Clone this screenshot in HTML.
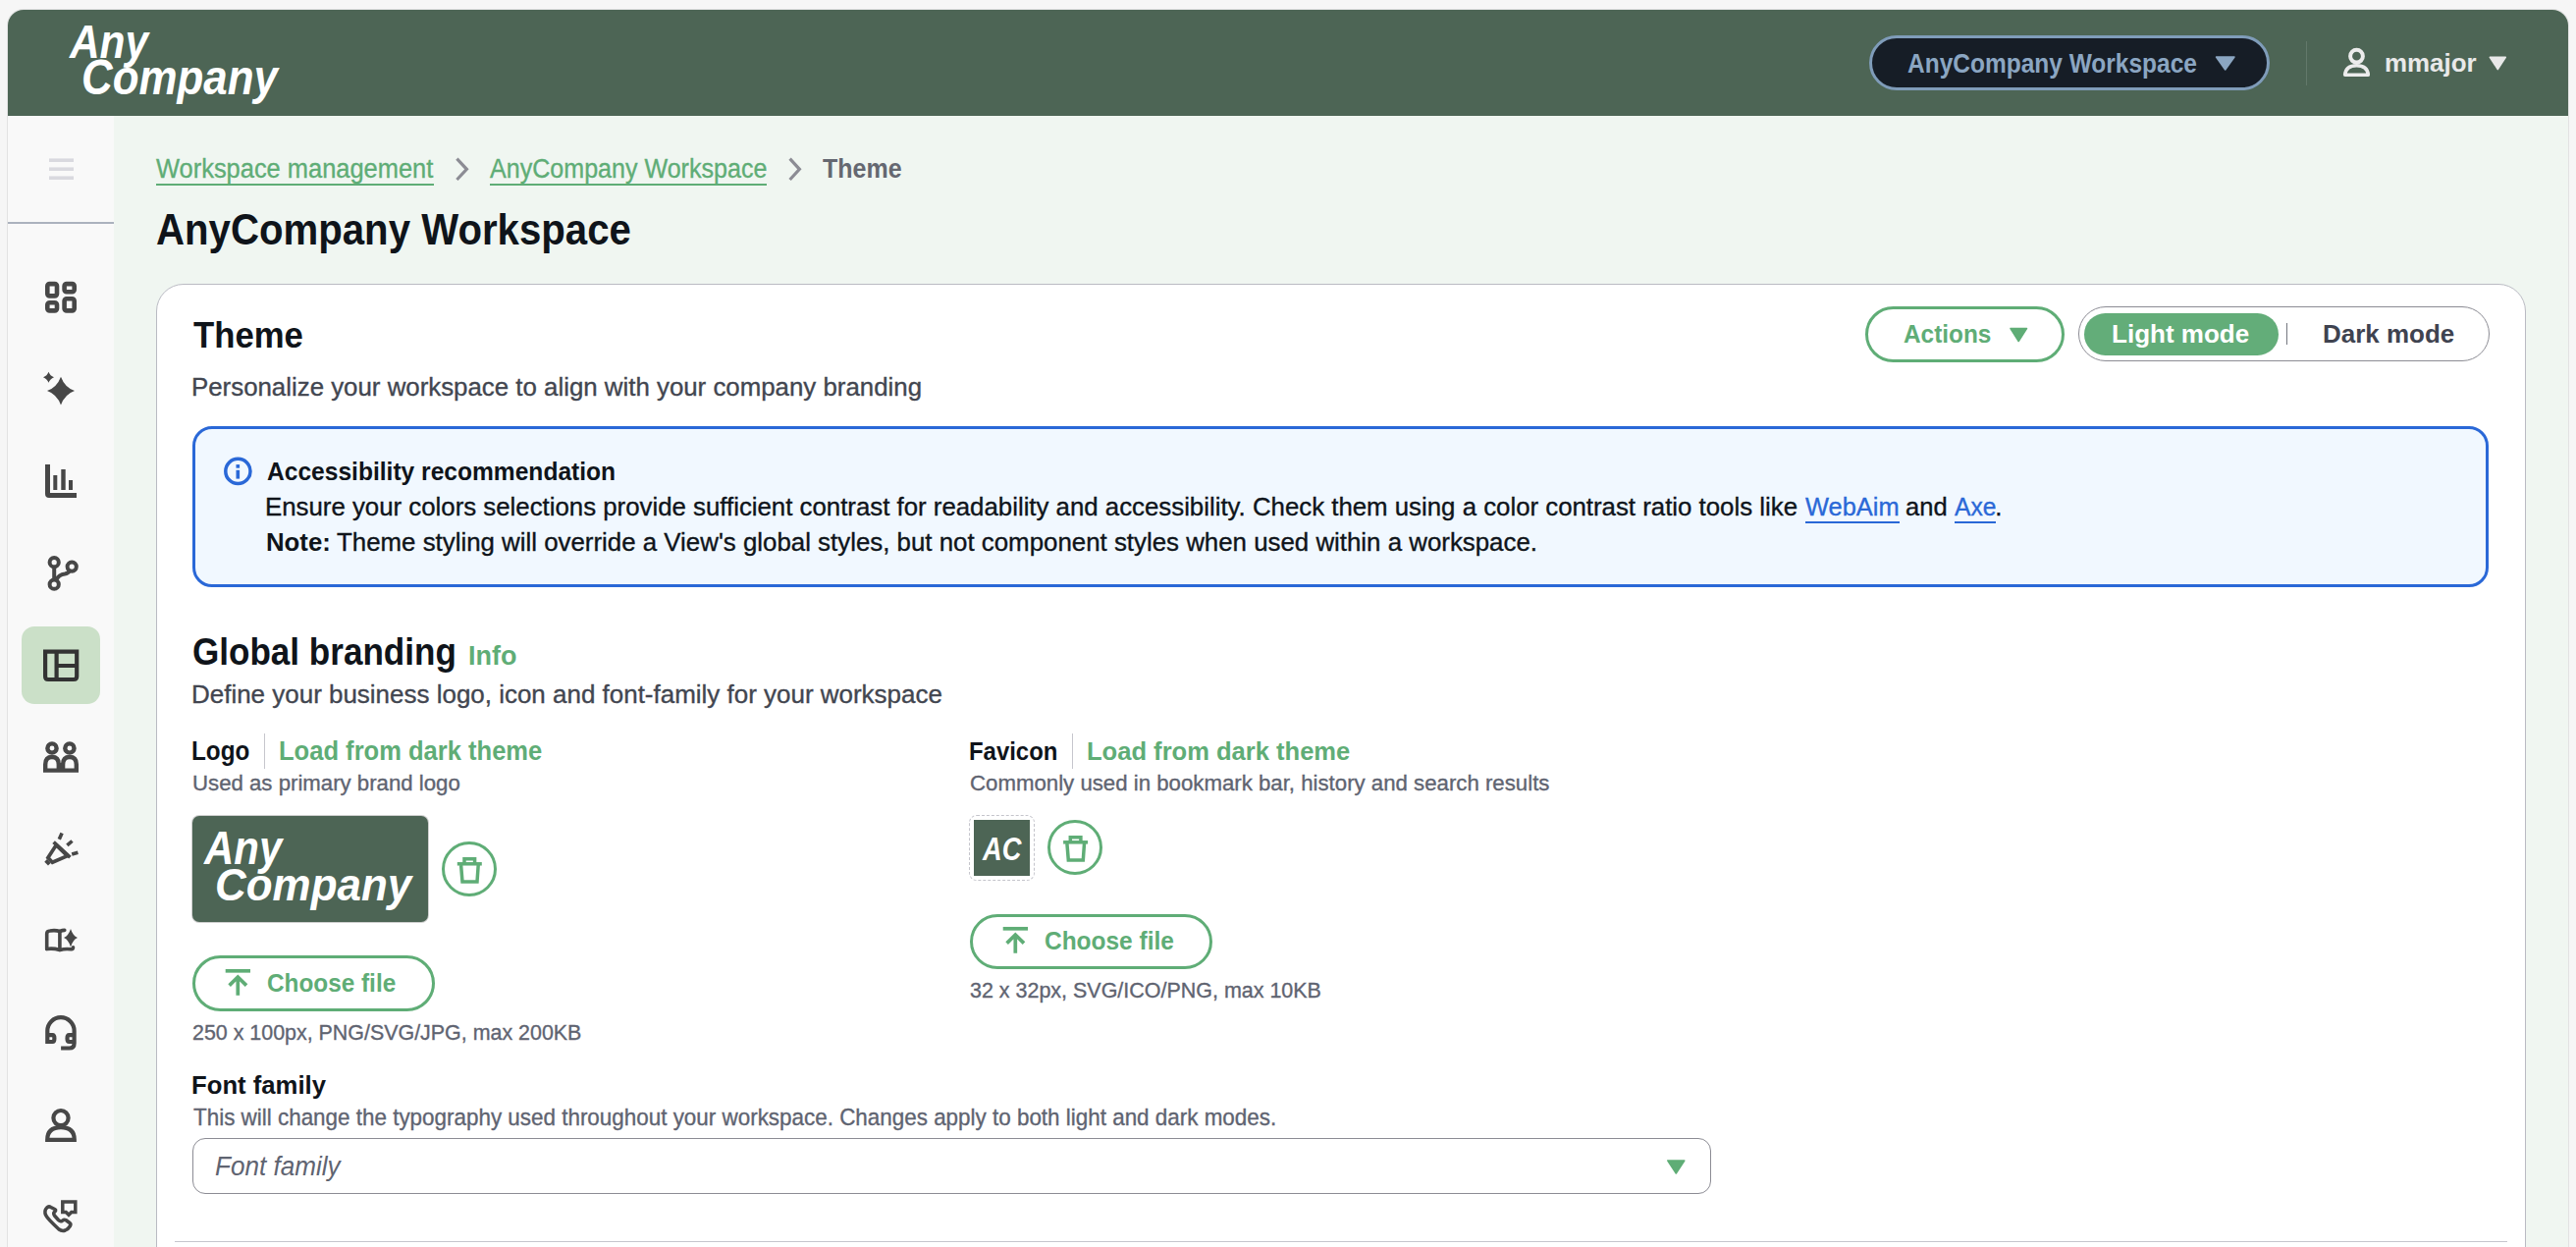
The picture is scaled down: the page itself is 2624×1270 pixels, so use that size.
<!DOCTYPE html>
<html><head><meta charset="utf-8">
<style>
*{margin:0;padding:0;box-sizing:border-box}
html,body{width:2624px;height:1270px;overflow:hidden;background:#f6f6f6;font-family:"Liberation Sans",sans-serif}
.a{position:absolute}
.tx{position:absolute;white-space:pre;transform-origin:0 0}
#frame{left:8px;top:10px;width:2608px;height:1300px;border-radius:16px 16px 0 0;overflow:hidden;background:#f0f6f1;box-shadow:0 0 0 1px #e2e2e2}
#hdr{left:8px;top:10px;width:2608px;height:108px;background:#4d6555;border-radius:16px 16px 0 0}
#side{left:8px;top:118px;width:108px;height:1160px;background:#f9f9f9}
#card{left:159px;top:289px;width:2414px;height:1100px;background:#fff;border:1.5px solid #babbc3;border-radius:28px}
.pill{position:absolute;border-radius:30px}
</style></head><body>
<div class="a" id="frame"></div>
<div class="a" id="hdr"></div>
<div class="a" id="side"></div>
<!-- frame edges -->
<div class="a" id="card"></div>

<!-- header controls -->
<div class="pill" style="left:1904px;top:36px;width:408px;height:56px;background:#161d26;border:3px solid #7f9cb9"></div>
<div class="a" style="left:2349px;top:42px;width:1px;height:45px;background:#62786a"></div>

<!-- actions / segmented -->
<div class="pill" style="left:1900px;top:312px;width:203px;height:57px;border:3px solid #5fad76"></div>
<div class="pill" style="left:2117px;top:312px;width:419px;height:56px;border:1.5px solid #8c8c94"></div>
<div class="pill" style="left:2123px;top:319px;width:198px;height:43px;background:#63ad79"></div>
<div class="a" style="left:2328.8px;top:329.4px;width:1.2px;height:21.5px;background:#74777f"></div>

<!-- alert -->
<div class="a" style="left:196px;top:434px;width:2339px;height:164px;background:#f1f8ff;border:3px solid #2a68d7;border-radius:20px"></div>

<!-- breadcrumb underlines -->
<div class="a" style="left:159px;top:187px;width:283px;height:2px;background:#5fad76"></div>
<div class="a" style="left:499px;top:187px;width:282px;height:2px;background:#5fad76"></div>
<!-- link underlines -->
<div class="a" style="left:1839px;top:530.8px;width:96px;height:2px;background:#2a68d7"></div>
<div class="a" style="left:1991px;top:530.8px;width:41.7px;height:2px;background:#2a68d7"></div>

<!-- logo / favicon -->
<div class="a" style="left:269px;top:747px;width:1px;height:36px;background:#c6c6cd"></div>
<div class="a" style="left:1092px;top:747px;width:1px;height:36px;background:#c6c6cd"></div>
<div class="a" style="left:196px;top:831px;width:240px;height:108px;background:#4d6555;border-radius:7px;box-shadow:0 0 0 1px #d0d0d0"></div>
<div class="a" style="left:987px;top:830.3px;width:67px;height:67px;border:1px dashed #c4c4cb;border-radius:8px"></div>
<div class="a" style="left:992px;top:835px;width:57px;height:57px;background:#4d6555"></div>
<div class="pill" style="left:450px;top:857px;width:56px;height:56px;border:3px solid #5fad76"></div>
<div class="pill" style="left:1067px;top:835px;width:56px;height:56px;border:3px solid #5fad76"></div>
<div class="pill" style="left:196px;top:973px;width:247px;height:57px;border:3px solid #5fad76"></div>
<div class="pill" style="left:988px;top:931px;width:247px;height:56px;border:3px solid #5fad76"></div>

<!-- select -->
<div class="a" style="left:196px;top:1159px;width:1547px;height:57.4px;border:1.5px solid #8c8c94;border-radius:13px"></div>
<div class="a" style="left:178px;top:1263.5px;width:2376px;height:1.5px;background:#c6c6cd"></div>

<svg class="a" style="left:0;top:0" width="2624" height="1270" viewBox="0 0 2624 1270">
<g fill="none" stroke-linejoin="round">
  <!-- hamburger -->
  <g fill="#d9d9df" stroke="none">
    <rect x="50" y="161.4" width="25" height="3.6"/><rect x="50" y="170.4" width="25" height="3.6"/><rect x="50" y="179.4" width="25" height="3.6"/>
  </g>
  <rect x="8" y="226" width="108" height="2" fill="#abb2be" stroke="none"/>
  <!-- grid icon -->
  <g stroke="#474747" stroke-width="4.6">
    <rect x="48.3" y="289.1" width="9.7" height="12.3" rx="2.2"/>
    <rect x="65.6" y="289.1" width="10.1" height="8.1" rx="2.2"/>
    <rect x="48.3" y="308.3" width="9.7" height="8.1" rx="2.2"/>
    <rect x="65.6" y="304.3" width="10.1" height="12.1" rx="2.2"/>
  </g>
  <!-- sparkle -->
  <g fill="#474747">
    <path d="M62 383.7 Q66 394.5 76 398 Q66 401.5 62 412.6 Q58 401.5 48 398 Q58 394.5 62 383.7Z"/>
    <path d="M49.5 378.8 Q51 382.8 55 384.3 Q51 385.8 49.5 389.8 Q48 385.8 44 384.3 Q48 382.8 49.5 378.8Z"/>
  </g>
  <!-- chart -->
  <g fill="#474747">
    <path d="M46 473 H51 V502 H78 V507 H50 Q46 507 46 503 Z"/>
    <rect x="54.3" y="484" width="4" height="15"/>
    <rect x="62.3" y="478" width="4.4" height="21"/>
    <rect x="70" y="489" width="4" height="10"/>
  </g>
  <!-- git -->
  <g stroke="#474747" stroke-width="4">
    <circle cx="55.2" cy="572.7" r="4.6"/>
    <circle cx="73.2" cy="577.1" r="4.6"/>
    <circle cx="55.2" cy="595.2" r="4.6"/>
    <path d="M55.2 577.3 V590.6"/>
    <path d="M57 591 Q60 585 66 584.5 Q69.5 584 71 581"/>
  </g>
  <!-- active tile -->
  <rect x="22" y="638" width="80" height="79" rx="13" fill="#cbe0c8"/>
  <g stroke="#333" stroke-width="4.2" stroke-linejoin="miter">
    <path d="M46.1 663.7 H78.2 V689 Q78.2 692 75 692 H49 Q46.1 692 46.1 689 Z"/>
    <path d="M57.6 663.7 V692 M57.6 678 H78.2"/>
  </g>
  <!-- people -->
  <g stroke="#474747" stroke-width="4.4" stroke-linejoin="miter">
    <circle cx="53" cy="762" r="4.6"/>
    <circle cx="70.9" cy="762" r="4.6"/>
    <path d="M46.2 784.4 V778.5 Q46.2 771 53 771 Q59.8 771 59.8 778.5 V784.4"/>
    <path d="M64.1 784.4 V778.5 Q64.1 771 70.9 771 Q77.8 771 77.8 778.5 V784.4"/>
    <path d="M44 784.6 H80"/>
    <rect x="59.5" y="777" width="5" height="8" fill="#474747" stroke="none"/>
  </g>
  <!-- megaphone -->
  <g stroke="#474747" stroke-width="3.7" stroke-linejoin="miter" transform="translate(40 840)">
    <path d="M17.3 20.6 L28.6 31.7 L13.4 38.2 L8.9 33.6 Z"/>
    <path d="M14.6 17.6 L31.4 33.2"/>
    <path d="M6.6 36.4 L10.3 40.2"/>
    <path d="M20.3 14.8 L23.1 8.5 M28.4 20.9 L33.5 16.5 M33.2 29.9 L39.4 28.2" stroke-width="3.6"/>
  </g>
  <!-- book -->
  <g stroke="#474747" stroke-width="3.6" stroke-linecap="round" transform="translate(40 934)">
    <path d="M7.7 32.5 V17 Q7.7 14.2 11 14 Q16 13 20.9 14.5 Q23.5 13.5 25.8 13.4"/>
    <path d="M7.7 32.5 Q14 31.5 20.9 33.5 Q27 31.8 32.5 32.8 Q34.5 32.5 34.5 30.7"/>
    <path d="M20.9 14.5 V33.5"/>
  </g>
  <path d="M72 946 Q74.2 953 79 955 Q74.2 957 72 964.5 Q69.8 957 65 955 Q69.8 953 72 946Z" fill="#474747"/>
  <!-- headset -->
  <g stroke="#474747" stroke-width="4.2" transform="translate(40 1028)">
    <path d="M8.3 35 V21.8 A13.65 13.65 0 0 1 35.6 21.8 V34.5 Q35.6 39.5 30.5 39.5 H22.1"/>
    <path d="M8.3 26.1 H13.5 Q15.4 26.1 15.4 29.5 Q15.4 33 13.5 33 H8.3"/>
    <path d="M35.6 26.1 H30.4 Q28.5 26.1 28.5 29.5 Q28.5 33 30.4 33 H35.6"/>
  </g>
  <!-- person -->
  <g stroke="#474747" stroke-width="4.2" stroke-linejoin="miter">
    <circle cx="62" cy="1138.6" r="7.6"/>
    <path d="M48.2 1160.9 Q48.2 1148.2 62 1148.2 Q75.8 1148.2 75.8 1160.9 Z"/>
  </g>
  <!-- phone -->
  <g stroke="#474747" stroke-width="3.5" transform="translate(40 1214)">
    <path d="M23.8 10 H36.8 V20.4 H32.8 L30 23.2 L27.2 20.4 H23.8 Z" stroke-linejoin="miter"/>
    <path d="M11.8 15.5 Q9.5 14 7.5 16.2 Q4.8 19 6.6 23.6 Q8.5 27.5 20 38 Q23 40.2 26.5 39 Q29.5 37.8 31.5 34.5 Q32.5 32.5 31 31.5 L27 28.5 Q25.3 27.6 23.5 29.2 Q21.5 30.5 19.5 28.5 L15.5 24 Q14 21.8 15.5 20.3 Q17.5 18.5 16.2 17.8 Z"/>
  </g>

  <!-- header workspace triangle & user -->
  <path d="M2257.5 58 H2276 L2266.7 71 Z" fill="#8ba6c2" stroke="#8ba6c2" stroke-width="1.5"/>
  <g stroke="#ececec" stroke-width="4">
    <circle cx="2400.5" cy="57.2" r="6.4"/>
    <path d="M2388.7 76.2 Q2389.5 66.7 2400.5 66.7 Q2411.5 66.7 2412.3 76.2 Z" stroke-width="3.6"/>
  </g>
  <path d="M2536.3 58.3 H2552.3 L2544.3 70.6 Z" fill="#e9e9e9" stroke="#e9e9e9" stroke-width="1.5"/>
  <!-- breadcrumb chevrons -->
  <path d="M465.4 161.6 L475.4 172.3 L465.4 183" stroke="#8c8c94" stroke-width="3.2" stroke-linejoin="miter"/>
  <path d="M804.6 161.6 L814.4 172.3 L804.6 183" stroke="#8c8c94" stroke-width="3.2" stroke-linejoin="miter"/>
  <!-- actions triangle -->
  <path d="M2048 334.5 H2064.5 L2056.2 347.5 Z" fill="#5fad76" stroke="#5fad76" stroke-width="1.5"/>
  <!-- info icon -->
  <circle cx="242.4" cy="479.9" r="12.6" stroke="#2a68d7" stroke-width="3.5"/>
  <rect x="240.5" y="478.8" width="3.6" height="8.8" fill="#2a68d7"/>
  <rect x="240.5" y="473.1" width="3.6" height="3.6" fill="#2a68d7"/>
  <!-- trash 1 -->
  <g stroke="#5fad76" stroke-width="3.5" stroke-linejoin="miter">
    <path d="M465.8 879.8 H490.8"/>
    <path d="M473 879.8 V874.8 H483.6 V879.8"/>
    <path d="M469.6 881 L471 898 H486 L487.2 881"/>
  </g>
  <g stroke="#5fad76" stroke-width="3.5" stroke-linejoin="miter" transform="translate(617.3 -22)">
    <path d="M465.8 879.8 H490.8"/>
    <path d="M473 879.8 V874.8 H483.6 V879.8"/>
    <path d="M469.6 881 L471 898 H486 L487.2 881"/>
  </g>
  <!-- upload icons -->
  <g stroke="#5fad76" stroke-width="3.7" stroke-linejoin="miter">
    <path d="M229.7 988.8 H255"/>
    <path d="M242.3 1013.7 V996.5 M233.6 1003.6 L242.3 995 L251 1003.6"/>
  </g>
  <g stroke="#5fad76" stroke-width="3.7" stroke-linejoin="miter" transform="translate(792 -43)">
    <path d="M229.7 988.8 H255"/>
    <path d="M242.3 1013.7 V996.5 M233.6 1003.6 L242.3 995 L251 1003.6"/>
  </g>
  <!-- select triangle -->
  <path d="M1698.8 1182 H1715.8 L1707.3 1195 Z" fill="#5fad76" stroke="#5fad76" stroke-width="1.5"/>
</g>
</svg>
<div class="tx" style="left:71.13px;top:16.369px;font-size:47.68px;line-height:53.262px;transform:scaleX(0.8895)"><span style="color:#fff;font-weight:bold;font-style:italic">Any</span></div>
<div class="tx" style="left:82.64px;top:51.395px;font-size:49.42px;line-height:55.211px;transform:scaleX(0.8883)"><span style="color:#fff;font-weight:bold;font-style:italic">Company</span></div>
<div class="tx" style="left:1942.62px;top:49.330px;font-size:28.05px;line-height:31.340px;transform:scaleX(0.8734)"><span style="color:#8ba6c2;font-weight:bold;font-style:normal">AnyCompany Workspace</span></div>
<div class="tx" style="left:2429.38px;top:49.697px;font-size:26.50px;line-height:29.605px;transform:scaleX(0.9776)"><span style="color:#e9e9e9;font-weight:bold;font-style:normal">mmajor</span></div>
<div class="tx" style="left:159.00px;top:156.492px;font-size:27.76px;line-height:31.015px;transform:scaleX(0.9166)"><span style="color:#5fad76;font-weight:normal;font-style:normal;-webkit-text-stroke:0.35px #5fad76">Workspace management</span></div>
<div class="tx" style="left:499.00px;top:156.492px;font-size:27.76px;line-height:31.015px;transform:scaleX(0.9034)"><span style="color:#5fad76;font-weight:normal;font-style:normal;-webkit-text-stroke:0.35px #5fad76">AnyCompany Workspace</span></div>
<div class="tx" style="left:838.00px;top:156.492px;font-size:27.76px;line-height:31.015px;transform:scaleX(0.9010)"><span style="color:#656871;font-weight:bold;font-style:normal">Theme</span></div>
<div class="tx" style="left:159.07px;top:208.912px;font-size:44.91px;line-height:50.177px;transform:scaleX(0.8949)"><span style="color:#0f141a;font-weight:bold;font-style:normal">AnyCompany Workspace</span></div>
<div class="tx" style="left:197.00px;top:320.552px;font-size:37.50px;line-height:41.895px;transform:scaleX(0.9255)"><span style="color:#0f141a;font-weight:bold;font-style:normal">Theme</span></div>
<div class="tx" style="left:194.98px;top:379.885px;font-size:26.16px;line-height:29.229px;transform:scaleX(0.9879)"><span style="color:#424650;font-weight:normal;font-style:normal;-webkit-text-stroke:0.35px #424650">Personalize your workspace to align with your company branding</span></div>
<div class="tx" style="left:1938.62px;top:325.967px;font-size:26.02px;line-height:29.067px;transform:scaleX(0.9367)"><span style="color:#5fad76;font-weight:bold;font-style:normal">Actions</span></div>
<div class="tx" style="left:2151.37px;top:325.642px;font-size:26.60px;line-height:29.716px;transform:scaleX(0.9787)"><span style="color:#fff;font-weight:bold;font-style:normal">Light mode</span></div>
<div class="tx" style="left:2365.88px;top:325.642px;font-size:26.60px;line-height:29.716px;transform:scaleX(0.9767)"><span style="color:#3f4350;font-weight:bold;font-style:normal">Dark mode</span></div>
<div class="tx" style="left:271.82px;top:466.454px;font-size:25.15px;line-height:28.093px;transform:scaleX(0.9775)"><span style="color:#0f141a;font-weight:bold;font-style:normal">Accessibility recommendation</span></div>
<div class="tx" style="left:270.18px;top:502.048px;font-size:25.87px;line-height:28.904px;transform:scaleX(0.9979)"><span style="color:#0f141a;font-weight:normal;font-style:normal;-webkit-text-stroke:0.35px #0f141a">Ensure your colors selections provide sufficient contrast for readability and accessibility. Check them using a color contrast ratio tools like</span></div>
<div class="tx" style="left:1839.00px;top:502.048px;font-size:25.87px;line-height:28.904px;transform:scaleX(0.9828)"><span style="color:#2a68d7;font-weight:normal;font-style:normal;-webkit-text-stroke:0.35px #2a68d7">WebAim</span></div>
<div class="tx" style="left:1941.10px;top:502.048px;font-size:25.87px;line-height:28.904px;transform:scaleX(0.9876)"><span style="color:#0f141a;font-weight:normal;font-style:normal;-webkit-text-stroke:0.35px #0f141a">and</span></div>
<div class="tx" style="left:1990.80px;top:502.048px;font-size:25.87px;line-height:28.904px;transform:scaleX(0.9510)"><span style="color:#2a68d7;font-weight:normal;font-style:normal;-webkit-text-stroke:0.35px #2a68d7">Axe</span></div>
<div class="tx" style="left:2032.18px;top:502.048px;font-size:25.87px;line-height:28.904px;transform:scaleX(1.0000)"><span style="color:#0f141a;font-weight:normal;font-style:normal;-webkit-text-stroke:0.35px #0f141a">.</span></div>
<div class="tx" style="left:270.59px;top:538.454px;font-size:25.15px;line-height:28.093px;transform:scaleX(1.0249)"><span style="color:#0f141a;font-weight:bold;font-style:normal">Note:</span></div>
<div class="tx" style="left:343.10px;top:538.454px;font-size:25.15px;line-height:28.093px;transform:scaleX(1.0283)"><span style="color:#0f141a;font-weight:normal;font-style:normal;-webkit-text-stroke:0.35px #0f141a">Theme styling will override a View&#x27;s global styles, but not component styles when used within a workspace.</span></div>
<div class="tx" style="left:195.90px;top:642.565px;font-size:38.37px;line-height:42.870px;transform:scaleX(0.9142)"><span style="color:#0f141a;font-weight:bold;font-style:normal">Global branding</span></div>
<div class="tx" style="left:477.11px;top:653.398px;font-size:27.04px;line-height:30.204px;transform:scaleX(0.9985)"><span style="color:#5fad76;font-weight:bold;font-style:normal">Info</span></div>
<div class="tx" style="left:194.97px;top:692.642px;font-size:26.60px;line-height:29.716px;transform:scaleX(0.9763)"><span style="color:#424650;font-weight:normal;font-style:normal;-webkit-text-stroke:0.35px #424650">Define your business logo, icon and font-family for your workspace</span></div>
<div class="tx" style="left:195.48px;top:750.398px;font-size:27.04px;line-height:30.204px;transform:scaleX(0.8979)"><span style="color:#0f141a;font-weight:bold;font-style:normal">Logo</span></div>
<div class="tx" style="left:284.00px;top:750.398px;font-size:27.04px;line-height:30.204px;transform:scaleX(0.9451)"><span style="color:#5fad76;font-weight:bold;font-style:normal">Load from dark theme</span></div>
<div class="tx" style="left:195.91px;top:785.659px;font-size:22.09px;line-height:24.682px;transform:scaleX(1.0059)"><span style="color:#5f6471;font-weight:normal;font-style:normal;-webkit-text-stroke:0.35px #5f6471">Used as primary brand logo</span></div>
<div class="tx" style="left:208.31px;top:836.138px;font-size:48.98px;line-height:54.724px;transform:scaleX(0.8565)"><span style="color:#fff;font-weight:bold;font-style:italic">Any</span></div>
<div class="tx" style="left:218.94px;top:875.518px;font-size:46.51px;line-height:51.963px;transform:scaleX(0.9448)"><span style="color:#fff;font-weight:bold;font-style:italic">Company</span></div>
<div class="tx" style="left:271.84px;top:987.616px;font-size:24.86px;line-height:27.768px;transform:scaleX(0.9791)"><span style="color:#5fad76;font-weight:bold;font-style:normal">Choose file</span></div>
<div class="tx" style="left:196.20px;top:1038.834px;font-size:22.67px;line-height:25.332px;transform:scaleX(0.9452)"><span style="color:#5f6471;font-weight:normal;font-style:normal;-webkit-text-stroke:0.35px #5f6471">250 x 100px, PNG/SVG/JPG, max 200KB</span></div>
<div class="tx" style="left:987.11px;top:750.967px;font-size:26.02px;line-height:29.067px;transform:scaleX(0.9190)"><span style="color:#0f141a;font-weight:bold;font-style:normal">Favicon</span></div>
<div class="tx" style="left:1106.70px;top:750.967px;font-size:26.02px;line-height:29.067px;transform:scaleX(0.9820)"><span style="color:#5fad76;font-weight:bold;font-style:normal">Load from dark theme</span></div>
<div class="tx" style="left:987.56px;top:785.578px;font-size:22.24px;line-height:24.845px;transform:scaleX(0.9995)"><span style="color:#5f6471;font-weight:normal;font-style:normal;-webkit-text-stroke:0.35px #5f6471">Commonly used in bookmark bar, history and search results</span></div>
<div class="tx" style="left:1001.05px;top:847.394px;font-size:32.41px;line-height:36.212px;transform:scaleX(0.8398)"><span style="color:#fff;font-weight:bold;font-style:italic">AC</span></div>
<div class="tx" style="left:1063.54px;top:943.967px;font-size:26.02px;line-height:29.067px;transform:scaleX(0.9404)"><span style="color:#5fad76;font-weight:bold;font-style:normal">Choose file</span></div>
<div class="tx" style="left:987.93px;top:996.902px;font-size:21.66px;line-height:24.195px;transform:scaleX(0.9913)"><span style="color:#5f6471;font-weight:normal;font-style:normal;-webkit-text-stroke:0.35px #5f6471">32 x 32px, SVG/ICO/PNG, max 10KB</span></div>
<div class="tx" style="left:194.99px;top:1091.373px;font-size:25.29px;line-height:28.255px;transform:scaleX(1.0160)"><span style="color:#0f141a;font-weight:bold;font-style:normal">Font family</span></div>
<div class="tx" style="left:196.65px;top:1124.522px;font-size:24.13px;line-height:26.956px;transform:scaleX(0.9295)"><span style="color:#5f6471;font-weight:normal;font-style:normal;-webkit-text-stroke:0.35px #5f6471">This will change the typography used throughout your workspace. Changes apply to both light and dark modes.</span></div>
<div class="tx" style="left:219.39px;top:1172.573px;font-size:27.62px;line-height:30.853px;transform:scaleX(0.9454)"><span style="color:#5f6471;font-weight:normal;font-style:italic">Font family</span></div>
</body></html>
